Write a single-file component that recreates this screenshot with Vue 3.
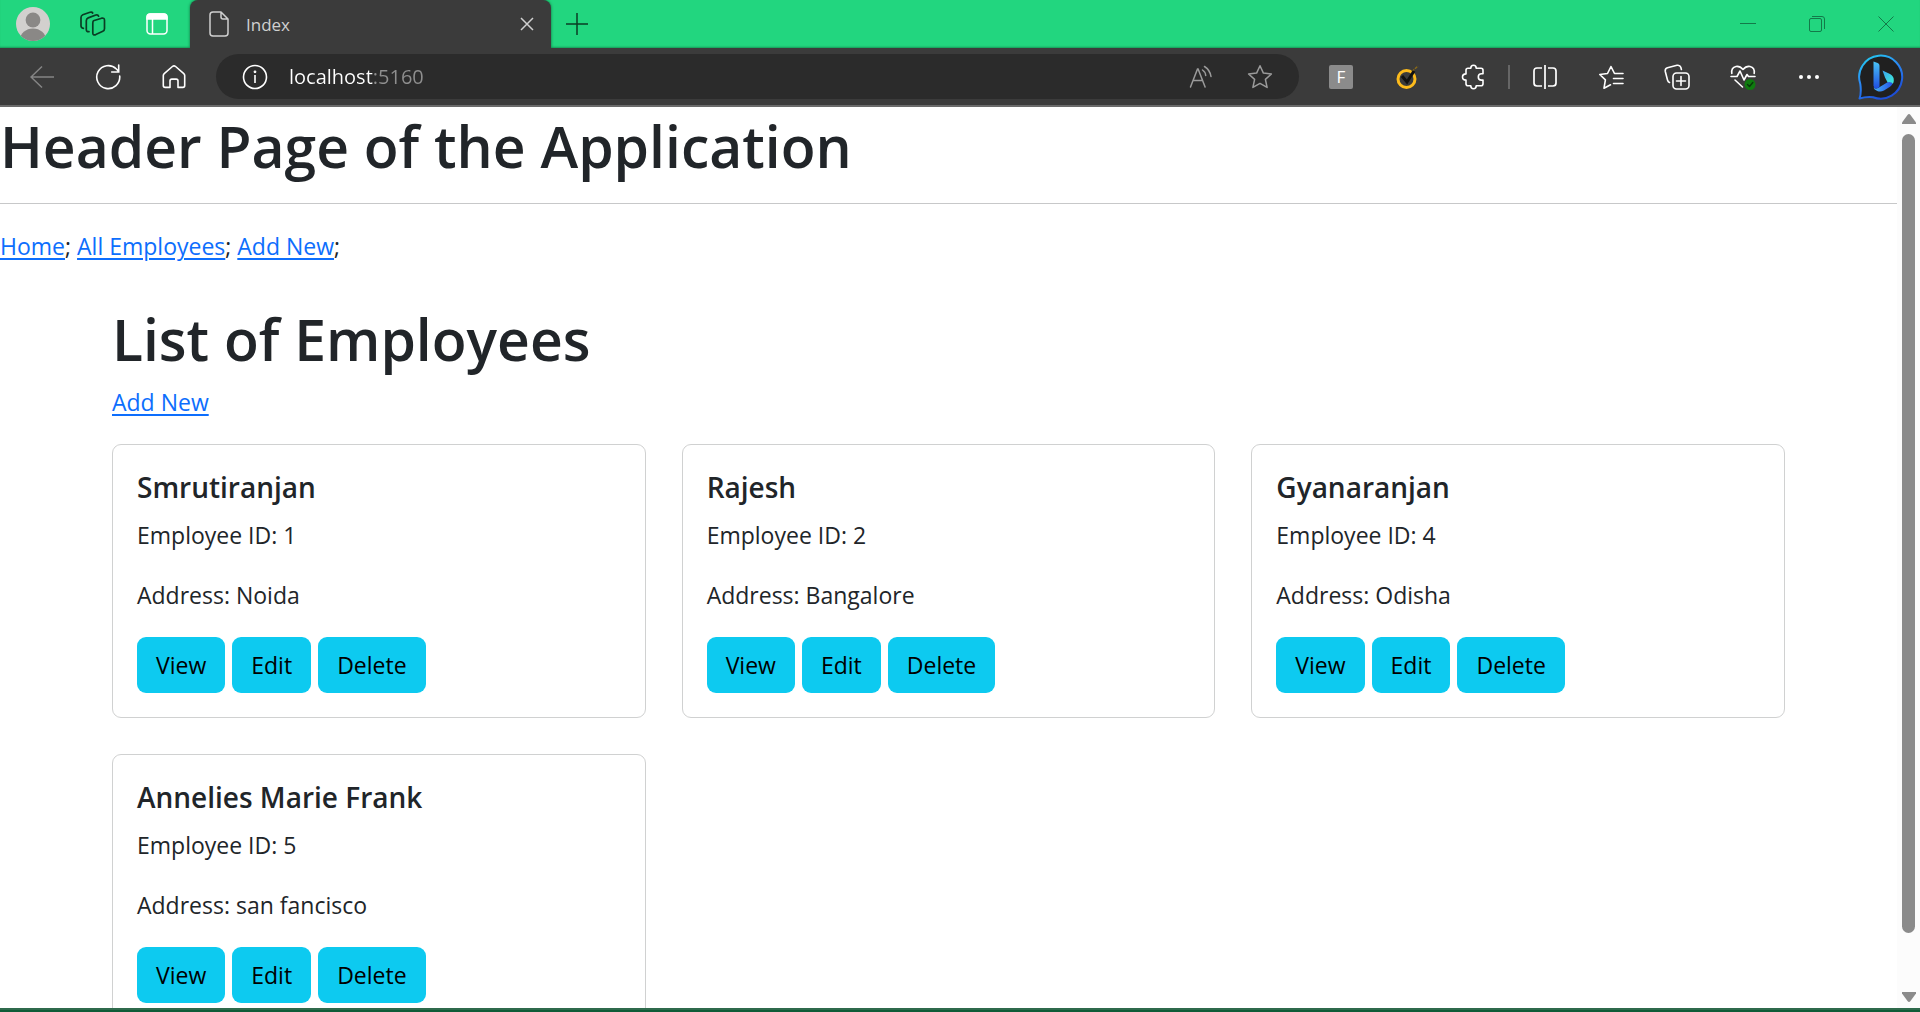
<script setup>
import { ref } from 'vue'

const address = ref('localhost:5160')
const employees = [
  { id: 1, name: 'Smrutiranjan', address: 'Noida' },
  { id: 2, name: 'Rajesh', address: 'Bangalore' },
  { id: 4, name: 'Gyanaranjan', address: 'Odisha' },
  { id: 5, name: 'Annelies Marie Frank', address: 'san fancisco' },
]
const actions = ['View', 'Edit', 'Delete']
</script>

<template>
  <div class="browser">
    <header class="tabstrip">
      <div class="strip-left">
        <button class="strip-btn" aria-label="Profile">
          <svg width="34" height="34" viewBox="0 0 34 34">
            <defs><clipPath id="face"><circle cx="17" cy="17" r="17" /></clipPath></defs>
            <circle cx="17" cy="17" r="17" fill="#d2d0ce" />
            <g clip-path="url(#face)" fill="#8a8886">
              <circle cx="17" cy="13" r="7.4" />
              <ellipse cx="17" cy="33" rx="13" ry="11.5" />
            </g>
          </svg>
        </button>
        <button class="strip-btn" aria-label="Workspaces">
          <svg width="26" height="26" viewBox="2 0 26 26" overflow="visible" fill="none" stroke="#0a3d24" stroke-width="1.7" stroke-linejoin="round" stroke-linecap="round">
            <path d="M13.400 9.800 21.600 7.200q2.900-.6 2.900 2v8.600q0 1.800-1.700 2.500l-7 3.300q-3 1.100-3-1.600V12.400q0-2 .6-2.600z" />
            <path d="M9 20.600q-2.700.4-2.700-2V9.800q0-2.200 1.900-2.900l7.600-2.900q2.200-.6 2.800 1.200" />
            <path d="M3.400 17.400Q1 17 1 14.800V6.600q0-2.200 1.800-2.900L10 1.200q2-.6 2.700.8" />
          </svg>
        </button>
        <button class="strip-btn" aria-label="Tab actions">
          <svg width="22" height="22" viewBox="0 0 22 22" fill="none" stroke="#fff" stroke-width="1.5">
            <rect x="1" y="1" width="20" height="20" rx="3.500" />
            <path d="M1 6V4q0-3 3-3h14q3 0 3 3v2z" fill="#fff" />
            <path d="M6.500 6v15" />
          </svg>
        </button>
      </div>
      <div class="tab">
        <svg width="20" height="26" viewBox="0 0 20 26" fill="none" stroke="#d0d0d0" stroke-width="1.5" stroke-linejoin="round">
          <path d="M4 1h8l7 7v14q0 3-3 3H4q-3 0-3-3V4q0-3 3-3zM12 1v5q0 2 2 2h5" />
        </svg>
        <span class="tab-title">Index</span>
        <button class="tab-close" aria-label="Close tab">
          <svg width="14" height="14" viewBox="0 0 14 14" stroke="#d0d0d0" stroke-width="1.5"><path d="M1 1l12 12M13 1 1 13" /></svg>
        </button>
      </div>
      <button class="new-tab" aria-label="New tab">
        <svg width="22" height="22" viewBox="0 0 22 22" stroke="#0a3d24" stroke-width="1.500"><path d="M11 0v22M0 11h22" /></svg>
      </button>
      <div class="window-controls">
        <button aria-label="Minimize"><svg width="16" height="16" viewBox="0 0 16 16" stroke="#137a49"><path d="M0 7.500h16" /></svg></button>
        <button aria-label="Restore">
          <svg width="16" height="16" viewBox="0 0 16 16" fill="none" stroke="#137a49">
            <rect x=".5" y="2.500" width="12" height="13" rx="1.500" />
            <path d="M3 .5h10q2.500 0 2.500 2.500v10" />
          </svg>
        </button>
        <button aria-label="Close"><svg width="16" height="16" viewBox="0 0 16 16" stroke="#137a49"><path d="M.5.5l15 15M15.500.5l-15 15" /></svg></button>
      </div>
    </header>

    <div class="toolbar">
      <button class="tool" aria-label="Back">
        <svg width="24" height="24" viewBox="0 0 24 24" fill="none" stroke="#858585" stroke-width="1.500"><path d="M12 1.500 1 12l11 10.500M1 12h23" /></svg>
      </button>
      <button class="tool" aria-label="Refresh">
        <svg width="26" height="26" viewBox="0 0 26 26" fill="none" stroke="#fff" stroke-width="1.600" stroke-linecap="round"><path d="M24.700 12A11.500 11.500 0 1 1 21.400 5l2.300 2.500M23.700 1v7h-7" /></svg>
      </button>
      <button class="tool" aria-label="Home">
        <svg width="24" height="26" viewBox="0 0 24 26" fill="none" stroke="#fff" stroke-width="1.600" stroke-linejoin="round"><path d="M10.400 2.500 2.200 9.600Q1.300 10.400 1.300 11.600v10q0 1.800 1.800 1.800H8v-6.500q0-1.800 1.800-1.800h4.400q1.800 0 1.800 1.800v6.500h4.900q1.800 0 1.800-1.800v-10q0-1.200-.9-2L13.600 2.500q-1.600-1.300-3.200 0z" /></svg>
      </button>

      <div class="address">
        <button aria-label="Site information">
          <svg width="26" height="26" viewBox="0 0 26 26" fill="none" stroke="#fff" stroke-width="1.600"><circle cx="13" cy="13" r="11.500" /><path d="M13 11v8" /><circle cx="13" cy="7.800" r=".6" fill="#fff" /></svg>
        </button>
        <input v-model="address" type="text" aria-label="Address" />
        <button aria-label="Read aloud">
          <svg width="24" height="24" viewBox="0 0 24 24" fill="none" stroke="#9b9b9b" stroke-width="1.500" stroke-linecap="round"><path d="M1.500 22 8.500 4h.6l7 18M4 15.500h9.600M13.500 5q3 2 3.200 5.500M15.500 1.500q5.500 3.500 6.500 10" /></svg>
        </button>
        <button aria-label="Add to favorites">
          <svg width="26" height="26" viewBox="0 0 26 26" fill="none" stroke="#9b9b9b" stroke-width="1.500" stroke-linejoin="round"><path d="M13 1.800l3.400 7.300 8 .9-6 5.400 1.700 8-7.100-4-7.100 4 1.700-8-6-5.400 8-.9z" /></svg>
        </button>
      </div>

      <button class="tool"><span class="ext-f">F</span></button>
      <button class="tool" aria-label="Security extension">
        <svg width="24" height="26" viewBox="0 0 24 26" fill="none"><circle cx="11.500" cy="15" r="8.500" stroke="#fdbb1c" stroke-width="3" /><path d="M17 7.500 23 2" stroke="#8a6a18" stroke-width="1.500" stroke-dasharray="3 1" /><path d="M7 12l5 6 7-11" stroke="#111" stroke-width="3" /></svg>
      </button>
      <button class="tool" aria-label="Extensions">
        <svg width="24" height="26" viewBox="0 0 24 26" fill="none" stroke="#fff" stroke-width="1.600" stroke-linejoin="round"><path d="M7 4.200h2.800Q9.800 1.300 12.500 1.300t2.700 2.900H20q2 0 2 2v3.500h-1.500q-3.200 0-3.200 3.200t3.200 3.200H22v3.600q0 2-2 2h-4.800q0 3-2.700 3t-2.700-3H7q-2 0-2-2v-3.600q-3.500 0-3.500-3T5 9.900V6.200q0-2 2-2z" /></svg>
      </button>
      <span class="divider"></span>
      <button class="tool" aria-label="Split screen">
        <svg width="24" height="24" viewBox="0 0 24 24" fill="none" stroke="#fff" stroke-width="1.700"><path d="M9 3H4Q1 3 1 6v12q0 3 3 3h5M15 3h5q3 0 3 3v12q0 3-3 3h-5M12 0v24" /></svg>
      </button>
      <button class="tool" aria-label="Favorites">
        <svg width="26" height="26" viewBox="0 0 26 26" fill="none" stroke="#fff" stroke-width="1.600" stroke-linejoin="round" stroke-linecap="round"><path d="M25 9.500h-8.500L13 2.500l-3.500 7-7.700 1 5.600 5.400-1.400 8.300 6.500-3.400M15.500 14.500H25M15.500 19.500H25" /></svg>
      </button>
      <button class="tool" aria-label="Collections">
        <svg width="26" height="26" viewBox="0 0 26 26" fill="none" stroke="#fff" stroke-width="1.600" stroke-linecap="round"><rect x="9" y="9" width="16" height="16" rx="3.500" /><path d="M17 12.500v9M12.500 17h9M5.500 18.500Q4 18 3.500 16L1.300 7.500Q.8 4.500 3.500 3.700L13 1.300q3-.5 3.800 2l.6 2.200" /></svg>
      </button>
      <button class="tool" aria-label="Browser essentials">
        <svg width="26" height="26" viewBox="0 0 26 26" fill="none" stroke="#fff" stroke-width="1.600" stroke-linecap="round" stroke-linejoin="round"><path d="M1.800 9.500Q1 3.500 6 2.500q4-.6 7 3 3-3.600 7-3 5 1 4.200 7M1 12.500h6l3-5.500 4 9 3-5.500 1.500 2H25M5 16l7.500 7" /><circle cx="20" cy="20.500" r="5.500" fill="#0f7b0f" stroke="none" /><path d="M17.500 20.500l2 2 3.300-4" stroke="#07380a" stroke-width="1.400" /></svg>
      </button>
      <button class="tool" aria-label="Settings and more">
        <svg width="20" height="4" viewBox="0 0 20 4" fill="#fff"><circle cx="2" cy="2" r="2" /><circle cx="10" cy="2" r="2" /><circle cx="18" cy="2" r="2" /></svg>
      </button>
      <button class="bing" aria-label="Bing">
        <svg width="46" height="46" viewBox="0 0 46 46">
          <defs>
            <linearGradient id="ring" x1="0" y1="0" x2=".5" y2="1"><stop offset="0" stop-color="#22d3ee" /><stop offset=".5" stop-color="#2b8cf5" /><stop offset="1" stop-color="#1d4fd8" /></linearGradient>
            <linearGradient id="stem" x1="0" y1="0" x2="0" y2="1"><stop offset="0" stop-color="#4ac5f7" /><stop offset="1" stop-color="#1f4ee0" /></linearGradient>
            <linearGradient id="bowl" x1="0" y1="0" x2="1" y2="0"><stop offset="0" stop-color="#46b4f8" /><stop offset="1" stop-color="#2452e6" /></linearGradient>
            <linearGradient id="lobe" x1="0" y1="0" x2="1" y2="1"><stop offset="0" stop-color="#3aa0f0" /><stop offset="1" stop-color="#3ff0d8" /></linearGradient>
          </defs>
          <path d="M1.500 44.500Q3.600 39 2.300 30A21.500 21.500 0 1 1 15 43.200Q8 42.500 1.500 44.500z" fill="#202020" stroke="url(#ring)" stroke-width="2" stroke-linejoin="round" />
          <path d="M15.500 33.500q2 2 5 .3l9-5.600q4-1.400 5.300 1.300-1 2-2.800 3.200l-6 3.700q-3.400 1.800-6.700.5-3.300-1.300-3.800-3.400z" fill="url(#bowl)" />
          <path d="M24.500 16.500l7.500 3.600q4 2.100 3.800 6.300 0 1.800-1 3.300-1.500-2.400-5.300-1.500l-2.500-4.600z" fill="url(#lobe)" />
          <path d="M15.500 7.500l4.200 1.600q1.800.8 1.800 2.600v21q-1.500 2-3.500 1.800-2.500-.3-2.500-3z" fill="url(#stem)" />
        </svg>
      </button>
    </div>

    <div class="viewport">
      <main class="page">
        <h1>Header Page of the Application</h1>
        <hr />
        <nav><a href="#">Home</a>; <a href="#">All Employees</a>; <a href="#">Add New</a>;</nav>
        <section class="container">
          <h1>List of Employees</h1>
          <a href="#">Add New</a>
          <div class="cards">
            <article v-for="e in employees" :key="e.id" class="card">
              <h5>{{ e.name }}</h5>
              <p>Employee ID: {{ e.id }}</p>
              <p>Address: {{ e.address }}</p>
              <div class="actions">
                <button v-for="a in actions" :key="a" class="btn">{{ a }}</button>
              </div>
            </article>
          </div>
        </section>
      </main>
      <div class="scrollbar">
        <svg width="14" height="10" viewBox="0 0 14 10"><path d="M5.500 1Q7-.8 8.500 1L14 8.500V10H0V8.500z" fill="#8b8b8b" /></svg>
        <div class="thumb"></div>
        <svg width="14" height="10" viewBox="0 0 14 10"><path d="M5.500 9Q7 10.800 8.500 9L14 1.500V0H0v1.500z" fill="#8b8b8b" /></svg>
      </div>
    </div>
  </div>
</template>

<style>
body {
  margin: 0;
  overflow: hidden;
}
</style>

<style scoped>
.browser {
  display: flex;
  flex-direction: column;
  height: 100vh;
  box-sizing: border-box;
  border-bottom: 2px solid #0f5c38;
  background: #fff;
  font-family: "Segoe UI", "Open Sans", "Noto Sans", sans-serif;
  color: #212529;
}
button {
  padding: 0;
  border: 0;
  background: none;
  font: inherit;
  color: inherit;
}
svg {
  display: block;
}
.tabstrip {
  display: flex;
  height: 48px;
  flex: none;
  background: #22d67f;
  box-shadow: inset 0 -2px 2px -1px #169a58;
}
.strip-left {
  display: flex;
  padding: 0 2px;
}
.strip-btn,
.tool,
.bing,
.new-tab,
.window-controls button {
  display: flex;
  align-items: center;
  justify-content: center;
}
.strip-btn {
  width: 62px;
}
.tab {
  display: flex;
  align-items: center;
  width: 361px;
  padding: 0 17px 0 19px;
  box-sizing: border-box;
  background: #3b3b3b;
  border-radius: 8px 8px 0 0;
  box-shadow: 0 0 3px #0c6b3c;
}
.tab-title {
  flex: 1;
  margin-left: 17px;
  font-size: 17px;
  color: #d0d0d0;
}
.new-tab {
  width: 52px;
}
.window-controls {
  display: flex;
  margin-left: auto;
}
.window-controls button {
  width: 69px;
}
.toolbar {
  position: relative;
  display: flex;
  align-items: center;
  flex: none;
  height: 57px;
  padding-left: 9px;
  background: #3b3b3b;
  border-bottom: 2px solid #6a6a6a;
}
.tool {
  flex: none;
  width: 66px;
  height: 48px;
}
.bing {
  flex: none;
  width: 78px;
}
.address {
  display: flex;
  align-items: center;
  flex: 1;
  height: 45px;
  margin: 0 9px;
  padding: 0 26px;
  box-sizing: border-box;
  border-radius: 23px;
  background: #2b2b2b;
}
.address input {
  flex: 1;
  min-width: 0;
  height: 40px;
  margin-left: 21px;
  padding: 0;
  border: 0;
  outline: 0;
  font-family: inherit;
  font-size: 20px;
  line-height: 40px;
  color: transparent;
  background: linear-gradient(90deg, #fff 85px, #8f8f8f 85px);
  background-clip: text;
}
.address button + button {
  margin-left: 34px;
}
.ext-f {
  width: 24px;
  height: 24px;
  border-radius: 2px;
  background: #8b8b8b;
  color: #fff;
  font-size: 17px;
  line-height: 24px;
}
.divider {
  width: 2px;
  height: 24px;
  margin: 0 2px;
  background: #666;
}
.viewport {
  display: flex;
  flex: 1;
  min-height: 0;
  border-bottom: 2px solid #2f6a4c;
}
.page {
  flex: 1;
  overflow: hidden;
  font-size: 23px;
  line-height: 36px;
}
h1 {
  margin: 0 0 12px;
  padding-top: 6px;
  font-size: 57px;
  font-weight: 600;
  line-height: 66px;
}
hr {
  margin: 24px 0;
  border: 0;
  border-top: 1px solid #c7c8c9;
}
a {
  color: #0d6efd;
  text-decoration: underline;
  text-decoration-thickness: 2px;
  text-underline-offset: 3px;
}
.container {
  max-width: 1673px;
  margin: 36px auto 0;
}
.cards {
  display: grid;
  grid-template-columns: repeat(3, 1fr);
  gap: 36px;
  margin-top: 24px;
}
.card {
  padding: 24px;
  border: 1px solid #d0d1d1;
  border-radius: 9px;
}
h5 {
  margin: 0 0 12px;
  font-size: 28px;
  font-weight: 600;
  line-height: 36px;
}
p {
  margin: 0 0 24px;
}
.actions {
  display: flex;
  gap: 7px;
}
.btn {
  height: 56px;
  padding: 0 19px;
  border-radius: 9px;
  background: #0dcaf0;
  color: #000;
}
.scrollbar {
  display: flex;
  flex-direction: column;
  align-items: center;
  gap: 10px;
  width: 23px;
  padding: 7px 0 6px;
  box-sizing: border-box;
  background: #fcfcfc;
}
.thumb {
  flex: 1;
  width: 13px;
  margin-bottom: 49px;
  border-radius: 7px;
  background: #8b8b8b;
}
</style>
